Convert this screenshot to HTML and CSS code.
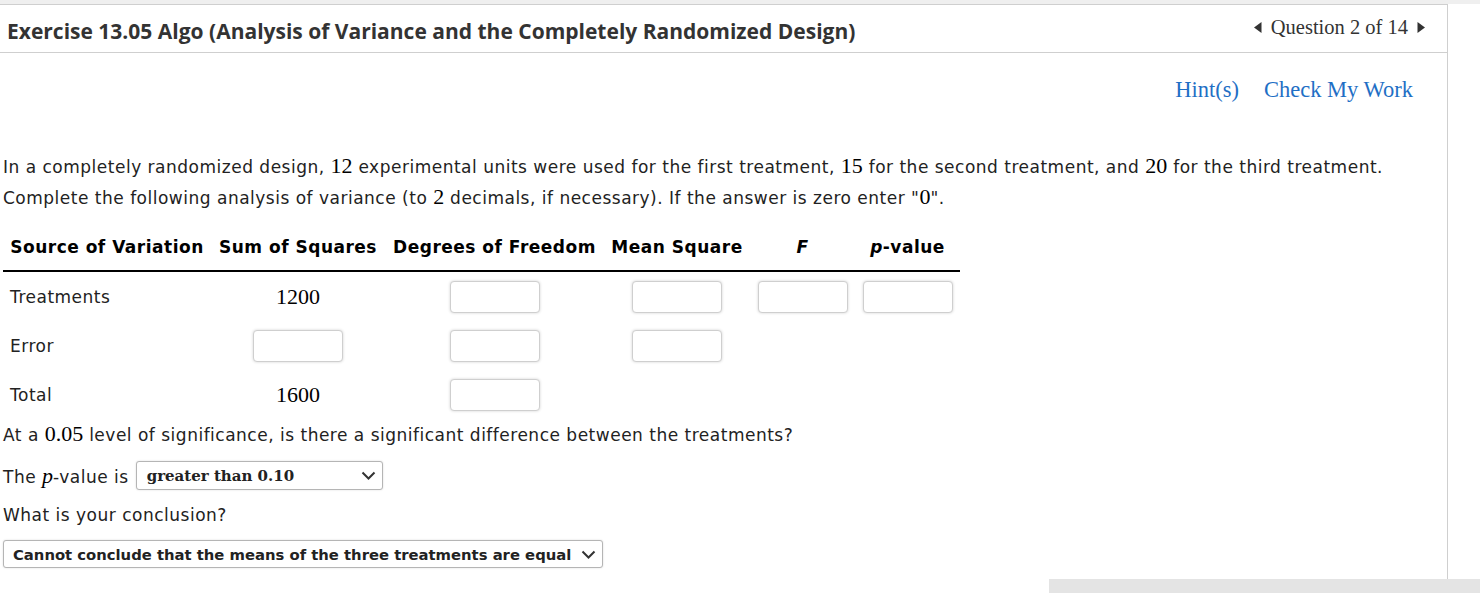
FILE: index.html
```html
<!DOCTYPE html>
<html>
<head>
<meta charset="utf-8">
<link rel="stylesheet" href="styles.css">
</head>
<body>
<div class="topstrip"></div>
<div class="frame">
  <div class="header">
    <div class="title">Exercise 13.05 Algo (Analysis of Variance and the Completely Randomized Design)</div>
    <div class="qnav">
      <svg class="tri" width="8" height="11" viewBox="0 0 8 11"><polygon points="7.5,0 7.5,11 0,5.5" fill="#333"/></svg>
      <span class="qtext">Question 2 of 14</span>
      <svg class="tri" width="8" height="11" viewBox="0 0 8 11"><polygon points="0.5,0 0.5,11 8,5.5" fill="#333"/></svg>
    </div>
  </div>
  <div class="tools">
    <span class="link">Hint(s)</span>
    <span class="link">Check My Work</span>
  </div>
  <div class="content">
    <p class="intro">In a completely randomized design, <span class="m">12</span> experimental units were used for the first treatment, <span class="m">15</span> for the second treatment, and <span class="m">20</span> for the third treatment.<br>Complete the following analysis of variance (to <span class="m">2</span> decimals, if necessary). If the answer is zero enter "<span class="m">0</span>".</p>
    <table class="anova">
      <thead>
        <tr>
          <th class="c1">Source of Variation</th>
          <th class="c2">Sum of Squares</th>
          <th class="c3">Degrees of Freedom</th>
          <th class="c4">Mean Square</th>
          <th class="c5"><i>F</i></th>
          <th class="c6"><i>p</i>-value</th>
        </tr>
      </thead>
      <tbody>
        <tr>
          <td class="lbl">Treatments</td>
          <td><span class="m">1200</span></td>
          <td><span class="inp"></span></td>
          <td><span class="inp"></span></td>
          <td><span class="inp"></span></td>
          <td><span class="inp"></span></td>
        </tr>
        <tr>
          <td class="lbl">Error</td>
          <td><span class="inp"></span></td>
          <td><span class="inp"></span></td>
          <td><span class="inp"></span></td>
          <td></td>
          <td></td>
        </tr>
        <tr>
          <td class="lbl">Total</td>
          <td><span class="m">1600</span></td>
          <td><span class="inp"></span></td>
          <td></td>
          <td></td>
          <td></td>
        </tr>
      </tbody>
    </table>
    <div class="q1">At a <span class="m">0.05</span> level of significance, is there a significant difference between the treatments?</div>
    <div class="q2">
      <span>The <span class="mi">p</span>-value is</span>
      <span class="sel sel1"><span class="seltext">greater than 0.10</span><svg class="chev" width="15" height="9" viewBox="0 0 15 9"><polyline points="1.5,1.5 7.5,7.5 13.5,1.5" fill="none" stroke="#333" stroke-width="2"/></svg></span>
    </div>
    <div class="q3">What is your conclusion?</div>
    <div class="q4">
      <span class="sel sel2"><span class="seltext">Cannot conclude that the means of the three treatments are equal</span><svg class="chev" width="15" height="9" viewBox="0 0 15 9"><polyline points="1.5,1.5 7.5,7.5 13.5,1.5" fill="none" stroke="#333" stroke-width="2"/></svg></span>
    </div>
  </div>
</div>
<div class="bottombar"></div>
</body>
</html>
```

FILE: styles.css
```css
html, body {
  margin: 0;
  padding: 0;
  background: #fff;
}
body {
  font-family: "DejaVu Sans", Verdana, sans-serif;
  font-size: 17px;
  letter-spacing: 0.5px;
  color: #222;
  width: 1480px;
  height: 593px;
  overflow: hidden;
}
.topstrip {
  height: 4px;
  background: #efefef;
}
.frame {
  width: 1447px;
  height: 574px;
  border-top: 1px solid #cfcfcf;
  border-right: 1px solid #cfcfcf;
  box-sizing: content-box;
}
.header {
  height: 47px;
  border-bottom: 1px solid #cfcfcf;
  display: flex;
  align-items: center;
  justify-content: space-between;
  padding: 0 22px 0 7px;
}
.title {
  font-family: "Open Sans", sans-serif;
  font-weight: 700;
  font-size: 21px;
  letter-spacing: 0;
  color: #333;
  padding-top: 4px;
}
.qnav {
  display: flex;
  align-items: center;
  gap: 9px;
  color: #333;
  padding-bottom: 2px;
  letter-spacing: 0;
}
.qtext {
  font-family: "Liberation Serif", "Times New Roman", serif;
  font-size: 20.5px;
}
.tools {
  display: flex;
  justify-content: flex-end;
  gap: 25px;
  padding: 24px 34px 0 0;
  height: 29px;
  letter-spacing: 0;
}
.link {
  font-family: "Liberation Serif", "Times New Roman", serif;
  font-size: 22.5px;
  color: #1f6fc5;
}
.content {
  padding-left: 3px;
}
.intro {
  margin: 46px 0 0 0;
  line-height: 31px;
}
.m {
  font-family: "Liberation Serif", "Times New Roman", serif;
  font-size: 22px;
  line-height: 1;
  letter-spacing: 0;
  color: #000;
}
.mi {
  font-family: "Liberation Serif", "Times New Roman", serif;
  font-style: italic;
  font-size: 22px;
  line-height: 1;
  letter-spacing: 0;
  color: #000;
}
.anova {
  border-collapse: collapse;
  margin-top: 13px;
}
.anova th {
  font-weight: 700;
  font-size: 17px;
  letter-spacing: 0.5px;
  color: #000;
  text-align: center;
  padding: 10px 7px 13px;
  border-bottom: 2px solid #000;
  white-space: nowrap;
}
.c1 { width: 194px; }
.c2 { width: 160px; }
.c3 { width: 205px; }
.c4 { width: 132px; }
.c5 { width: 91px; }
.c6 { width: 91px; }
.anova td {
  text-align: center;
  padding: 9px 7px 8px;
  height: 32px;
  vertical-align: middle;
}
.anova td.lbl {
  text-align: left;
}
.inp {
  display: inline-block;
  width: 90px;
  height: 32px;
  box-sizing: border-box;
  border: 1px solid #cfcfcf;
  border-radius: 4px;
  box-shadow: 0 0 3px rgba(0,0,0,0.18);
  vertical-align: middle;
  background: #fff;
}
.q1 {
  height: 32px;
  line-height: 32px;
}
.q2 {
  margin-top: 10px;
  display: flex;
  align-items: center;
  gap: 7px;
}
.sel {
  display: inline-flex;
  align-items: center;
  justify-content: space-between;
  box-sizing: border-box;
  border: 1px solid #b5b5b5;
  border-radius: 3px;
  background: #fff;
  box-shadow: 0 0 2px rgba(0,0,0,0.15);
  letter-spacing: 0;
}
.sel1 {
  width: 247px;
  height: 29px;
  padding: 0 6px 0 10px;
}
.sel1 .seltext {
  font-family: "DejaVu Serif", Georgia, serif;
  font-weight: 700;
  font-size: 15px;
  color: #222;
}
.q3 {
  margin-top: 13px;
  line-height: 24px;
}
.q4 {
  margin-top: 13px;
}
.sel2 {
  width: 600px;
  height: 28px;
  padding: 0 6px 0 9px;
}
.sel2 .seltext {
  font-weight: 700;
  font-size: 14.8px;
  color: #222;
}
.bottombar {
  margin-left: 1049px;
  height: 14px;
  background: #e4e4e4;
}
```
